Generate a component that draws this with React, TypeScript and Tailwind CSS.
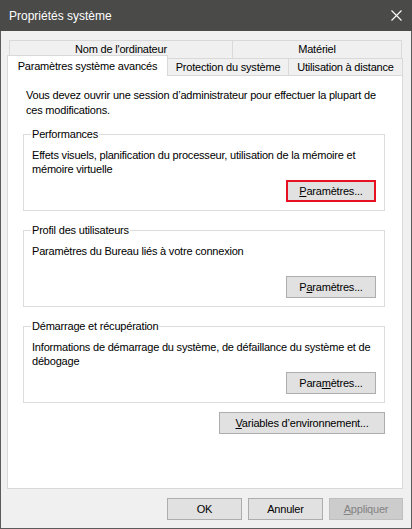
import React, { ReactNode } from 'react';

const font = { fontFamily: '"Liberation Sans", Arial, sans-serif' };

function WinButton({ children, highlight, disabled, className }: { children: ReactNode; highlight?: boolean; disabled?: boolean; className?: string }) {
  const base = 'flex h-[22px] items-center justify-center text-[11px] tracking-[-0.2px]';
  const look = highlight
    ? 'border-2 border-[#e81123] bg-[#e1e1e1] text-black'
    : disabled
      ? 'border border-[#bfbfbf] bg-[#cccccc] text-[#838383]'
      : 'border border-[#adadad] bg-[#e1e1e1] text-black';
  return <div className={`${base} ${look} ${className ?? ''}`}>{children}</div>;
}

function GroupBox({ title, children, button }: { title: string; children: ReactNode; button: ReactNode }) {
  return (
    <div className="relative flex h-[77px] flex-col border border-[#dcdcdc] px-[8px] pt-[13px] pb-[8px]">
      <span className="absolute top-[-8px] left-[7px] bg-white px-[1px] text-[11px] leading-[15px] tracking-[-0.2px]">{title}</span>
      <p className="text-[11px] leading-[14px] tracking-[-0.2px]">{children}</p>
      <div className="mt-auto flex justify-end">{button}</div>
    </div>
  );
}

export default function App() {
  return (
    <div className="flex h-[529px] w-[412px] flex-col bg-[#f0f0f0] text-black" style={font}>
      <div className="flex h-[31px] shrink-0 items-center justify-between bg-[#4a4a48] pl-[9px] pr-[9px]">
        <span className="text-[12px] text-white">Propriétés système</span>
        <svg width="11" height="11" viewBox="0 0 11 11" className="mr-[1px]">
          <path d="M0.5 0.5 L10.5 10.5 M10.5 0.5 L0.5 10.5" stroke="#ffffff" strokeWidth="1.1" />
        </svg>
      </div>
      <div className="flex flex-1 flex-col border-x border-b border-[#5b5b5b] pl-[6px] pr-[8px] pt-[9px]">
        {/* tabs */}
        <div className="ml-[2px] mr-[1px] flex h-[18px] text-[11px] tracking-[-0.2px]">
          <div className="flex w-[224px] items-center justify-center border border-b-0 border-[#d9d9d9]">Nom de l'ordinateur</div>
          <div className="flex flex-1 items-center justify-center border border-b-0 border-l-0 border-[#d9d9d9]">Matériel</div>
        </div>
        <div className="relative z-10 flex h-[17px] items-end text-[11px] tracking-[-0.2px]">
          <div className="mb-[-1px] flex h-[21px] w-[161px] items-start justify-center border border-b-0 border-[#d9d9d9] bg-white pt-[2px]">
            Paramètres système avancés
          </div>
          <div className="flex h-[17px] w-[120px] items-center justify-center border-t border-[#d9d9d9]">Protection du système</div>
          <div className="flex h-[17px] w-[115px] items-center justify-center border-x border-t border-[#d9d9d9]">Utilisation à distance</div>
        </div>
        {/* panel */}
        <div className="flex h-[414px] w-[396px] flex-col border border-[#d9d9d9] bg-white pl-[15px] pr-[17px] pt-[12px]">
          <p className="pl-[3px] text-[11px] leading-[15px] tracking-[-0.2px]">
            Vous devez ouvrir une session d’administrateur pour effectuer la plupart de
            <br />
            ces modifications.
          </p>
          <div className="mt-[16px] flex flex-col gap-[19px]">
            <GroupBox
              title="Performances"
              button={
                <WinButton highlight className="w-[90px]">
                  <span><u>P</u>aramètres...</span>
                </WinButton>
              }
            >
              Effets visuels, planification du processeur, utilisation de la mémoire et
              <br />
              mémoire virtuelle
            </GroupBox>
            <GroupBox
              title="Profil des utilisateurs"
              button={
                <WinButton className="w-[90px]">
                  <span>P<u>a</u>ramètres...</span>
                </WinButton>
              }
            >
              Paramètres du Bureau liés à votre connexion
            </GroupBox>
            <GroupBox
              title="Démarrage et récupération"
              button={
                <WinButton className="w-[90px]">
                  <span>Para<u>m</u>ètres...</span>
                </WinButton>
              }
            >
              Informations de démarrage du système, de défaillance du système et de
              <br />
              débogage
            </GroupBox>
          </div>
          <div className="mt-[9px] flex justify-end">
            <WinButton className="w-[166px]">
              <span><u>V</u>ariables d’environnement...</span>
            </WinButton>
          </div>
        </div>
        {/* footer buttons */}
        <div className="mt-[9px] flex justify-end gap-[6px]">
          <WinButton className="w-[75px]">OK</WinButton>
          <WinButton className="w-[75px]">Annuler</WinButton>
          <WinButton disabled className="w-[74px]">
            <span><u>A</u>ppliquer</span>
          </WinButton>
        </div>
      </div>
    </div>
  );
}
